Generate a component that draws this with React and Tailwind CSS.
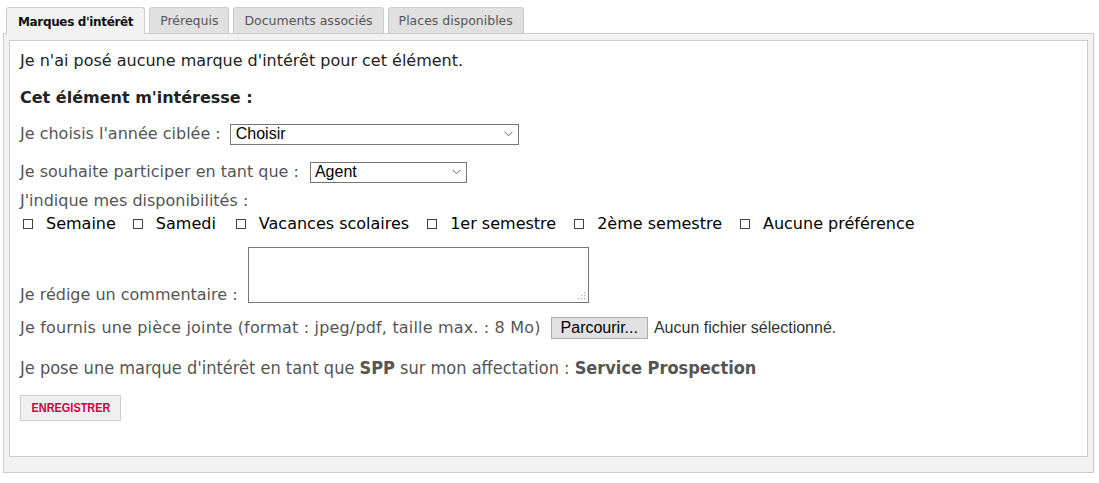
import React from "react";

const Chevron = () => (
  <svg width="9" height="6" viewBox="0 0 9 6" className="shrink-0">
    <path d="M0.5 0.8 L4.5 4.8 L8.5 0.8" fill="none" stroke="#606060" strokeWidth="1" />
  </svg>
);

const Check = ({ label, className = "" }) => (
  <span className={"inline-flex items-center " + className}>
    <span className="inline-block w-[10px] h-[10px] border border-[#444] mr-[13px] mt-[-1px]" />
    <span>{label}</span>
  </span>
);

export default function App() {
  const verd = { fontFamily: '"DejaVu Sans", Verdana, sans-serif' };
  const arial = { fontFamily: '"Liberation Sans", Arial, sans-serif' };
  return (
    <div className="bg-white w-[1099px] h-[483px] pt-[7px] px-[3px]" style={verd}>
      <div className="flex gap-[4px] pl-[3px] text-[12.5px] h-[26px]">
        <div className="relative z-10 h-[27px] px-[11px] pt-[2px] border border-b-0 border-[#ccc] rounded-t-[3px] bg-[#f2f2f2] font-bold text-[12px] tracking-[-0.35px] text-[#111] flex items-center">
          Marques d'intérêt
        </div>
        <div className="h-[26px] px-[10px] pt-[2px] border border-b-0 border-[#ccc] rounded-t-[3px] bg-[#e0e0e0] text-[#555] flex items-center">
          Prérequis
        </div>
        <div className="h-[26px] px-[10px] pt-[2px] border border-b-0 border-[#ccc] rounded-t-[3px] bg-[#e0e0e0] text-[#555] flex items-center">
          Documents associés
        </div>
        <div className="h-[26px] px-[10px] pt-[2px] border border-b-0 border-[#ccc] rounded-t-[3px] bg-[#e0e0e0] text-[#555] flex items-center">
          Places disponibles
        </div>
      </div>
      <div className="w-[1091px] border border-[#ccc] bg-[#f2f2f2] pt-[6px] px-[5px] pb-[15px]">
        <div className="h-[417px] bg-white border border-[#ccc] pl-[10px] pt-[10px] text-[16px] text-[#555]">
          <div className="h-[20px] leading-[20px] text-[#222]">Je n'ai posé aucune marque d'intérêt pour cet élément.</div>
          <div className="mt-[17px] h-[20px] leading-[20px] font-bold text-[#222]">Cet élément m'intéresse :</div>
          <div className="mt-[16px] flex items-center h-[20px]">
            <span>Je choisis l'année ciblée :</span>
            <div className="ml-[9px] w-[289px] h-[21px] border border-[#767676] flex items-center justify-between pl-[5px] pr-[5px] text-black text-[16px]" style={arial}>
              <span>Choisir</span>
              <Chevron />
            </div>
          </div>
          <div className="mt-[18px] flex items-center h-[20px]">
            <span>Je souhaite participer en tant que :</span>
            <div className="ml-[11px] w-[157px] h-[21px] border border-[#767676] flex items-center justify-between pl-[4px] pr-[5px] text-black text-[16px]" style={arial}>
              <span>Agent</span>
              <Chevron />
            </div>
          </div>
          <div className="mt-[9px] h-[20px] leading-[20px]">J'indique mes disponibilités :</div>
          <div className="mt-[3px] h-[20px] flex items-center pl-[3px] text-black">
            <Check label="Semaine" />
            <Check label="Samedi" className="ml-[17px]" />
            <Check label="Vacances scolaires" className="ml-[20px]" />
            <Check label="1er semestre" className="ml-[18px]" />
            <Check label="2ème semestre" className="ml-[18px]" />
            <Check label="Aucune préférence" className="ml-[18px]" />
          </div>
          <div className="mt-[13px] flex items-end">
            <span className="leading-[20px] mb-[-2px]">Je rédige un commentaire :</span>
            <div className="relative ml-[10px] w-[341px] h-[56px] border border-[#767676]">
              <svg className="absolute right-[2px] bottom-[2px]" width="8" height="8" viewBox="0 0 8 8">
                <rect x="6" y="0" width="1.3" height="1.3" fill="#aaa" />
                <rect x="3" y="3" width="1.3" height="1.3" fill="#aaa" />
                <rect x="6" y="3" width="1.3" height="1.3" fill="#aaa" />
                <rect x="0" y="6" width="1.3" height="1.3" fill="#aaa" />
                <rect x="3" y="6" width="1.3" height="1.3" fill="#aaa" />
                <rect x="6" y="6" width="1.3" height="1.3" fill="#aaa" />
              </svg>
            </div>
          </div>
          <div className="mt-[14px] flex items-center h-[22px]">
            <span className="tracking-[0.17px]">Je fournis une pièce jointe (format : jpeg/pdf, taille max. : 8 Mo)</span>
            <div className="ml-[10px] h-[22px] px-[9px] bg-[#e1e1e1] border border-[#adadad] text-black text-[16px] flex items-center" style={arial}>
              Parcourir...
            </div>
            <span className="ml-[6px] text-[#333] text-[16px]" style={arial}>Aucun fichier sélectionné.</span>
          </div>
          <div className="mt-[17px] h-[24px] leading-[24px] text-[18px] text-[#555]" style={{ fontFamily: '"DejaVu Sans Condensed", "Liberation Sans", sans-serif' }}>
            Je pose une marque d'intérêt en tant que <b>SPP</b> sur mon affectation : <b>Service Prospection</b>
          </div>
          <div className="mt-[15px] w-[101px] h-[26px] bg-[#f0f0f0] border border-[#ccc] flex items-center justify-center text-[13px] font-bold text-[#d6003b]" style={arial}>
            <span className="inline-block scale-x-[0.84]">ENREGISTRER</span>
          </div>
        </div>
      </div>
    </div>
  );
}
